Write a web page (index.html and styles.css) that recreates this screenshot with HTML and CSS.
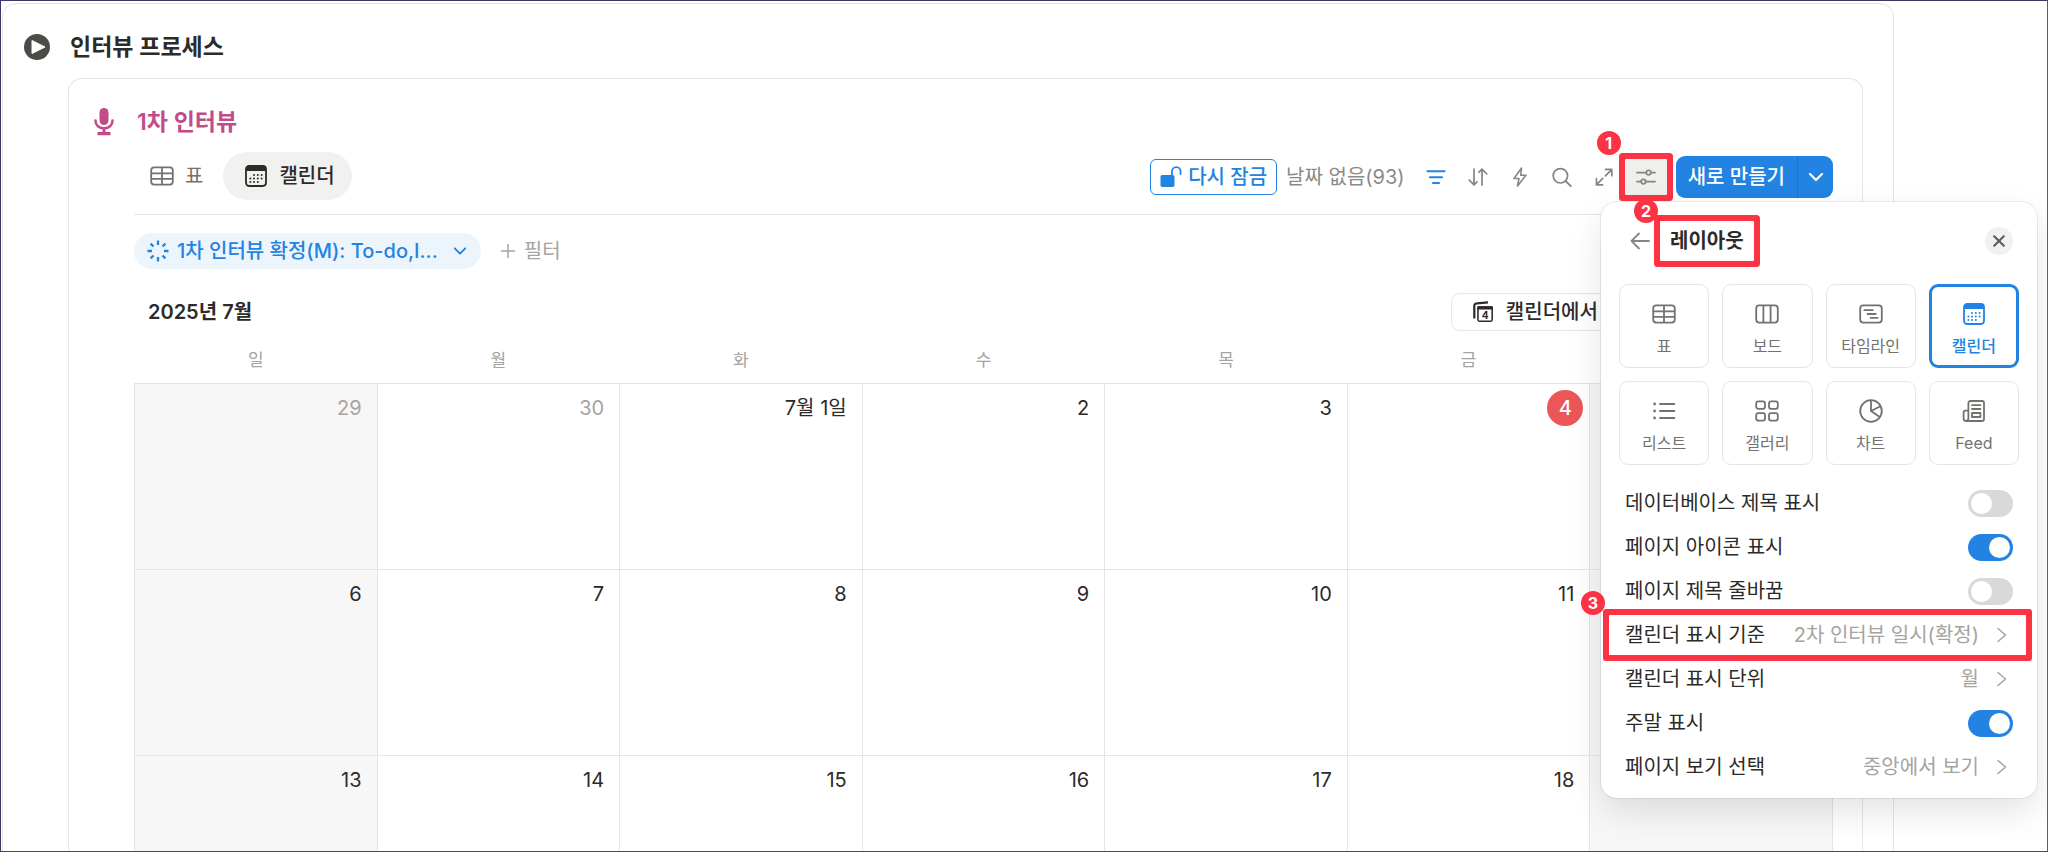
FILE: index.html
```html
<!DOCTYPE html>
<html lang="ko">
<head>
<meta charset="utf-8">
<meta name="viewport" content="width=device-width, initial-scale=1">
<title>인터뷰 프로세스</title>
<link rel="stylesheet" href="styles.css">
</head>
<body>
<svg class="sprite" aria-hidden="true">
  <symbol id="i-table" viewBox="0 0 24 24"><g fill="none" stroke="currentColor" stroke-width="1.8"><rect x="1.2" y="3.4" width="21.6" height="17.2" rx="3"/><path d="M1.2 9.4h21.6M1.2 14.8h21.6M12 3.4v17.2"/></g></symbol>
  <symbol id="i-board" viewBox="0 0 24 24"><g fill="none" stroke="currentColor" stroke-width="1.8"><rect x="1.2" y="3.4" width="21.6" height="17.2" rx="3"/><path d="M8.4 3.4v17.2M15.6 3.4v17.2"/></g></symbol>
  <symbol id="i-timeline" viewBox="0 0 24 24"><g fill="none" stroke="currentColor" stroke-width="1.8" stroke-linecap="round"><rect x="1.2" y="3.4" width="21.6" height="17.2" rx="3"/><path d="M5.4 8.2h8.4M8.6 12h8.2M11.6 15.8h7"/></g></symbol>
  <symbol id="i-calendar" viewBox="0 0 24 24"><rect x="2" y="2" width="20" height="20" rx="3.2" fill="none" stroke="currentColor" stroke-width="1.8"/><path d="M2 7V5a3.6 3.6 0 0 1 3.6-3.6h12.8A3.6 3.6 0 0 1 22 5v2z" fill="currentColor"/><g fill="currentColor"><circle cx="10" cy="10.9" r="1"/><circle cx="13.8" cy="10.9" r="1"/><circle cx="17.6" cy="10.9" r="1"/><circle cx="6.4" cy="14.5" r="1"/><circle cx="10" cy="14.5" r="1"/><circle cx="13.8" cy="14.5" r="1"/><circle cx="17.6" cy="14.5" r="1"/><circle cx="6.4" cy="18.1" r="1"/><circle cx="10" cy="18.1" r="1"/><circle cx="13.8" cy="18.1" r="1"/></g></symbol>
  <symbol id="i-list" viewBox="0 0 24 24"><g fill="none" stroke="currentColor" stroke-width="1.8" stroke-linecap="round"><path d="M8 5h14.4M8 12h14.4M8 19h14.4"/></g><g fill="currentColor"><circle cx="2.6" cy="5" r="1.4"/><circle cx="2.6" cy="12" r="1.4"/><circle cx="2.6" cy="19" r="1.4"/></g></symbol>
  <symbol id="i-gallery" viewBox="0 0 24 24"><g fill="none" stroke="currentColor" stroke-width="1.8"><rect x="1.2" y="2.4" width="8.8" height="7.4" rx="2"/><rect x="14" y="2.4" width="8.8" height="7.4" rx="2"/><rect x="1.2" y="14.2" width="8.8" height="7.4" rx="2"/><rect x="14" y="14.2" width="8.8" height="7.4" rx="2"/></g></symbol>
  <symbol id="i-chart" viewBox="0 0 24 24"><g fill="none" stroke="currentColor" stroke-width="1.8" stroke-linejoin="round"><circle cx="12" cy="12" r="10.8"/><path d="M12 1.2V12l9.4-4.8M12 12l8.8 6"/></g></symbol>
  <symbol id="i-feed" viewBox="0 0 24 24"><g fill="none" stroke="currentColor" stroke-width="1.8" stroke-linejoin="round" stroke-linecap="round"><path d="M6.4 18.8V4a2 2 0 0 1 2-2H20a2 2 0 0 1 2 2v16a2 2 0 0 1-2 2H4a2.4 2.4 0 0 1-2.4-2.4v-6.2a1.8 1.8 0 0 1 1.8-1.8h3M6.4 18.8A2.8 2.8 0 0 1 4 22M10 6.2h8.4M10 10h8.4"/><rect x="10" y="14" width="8.4" height="4"/></g></symbol>
  <symbol id="i-chevron-down" viewBox="0 0 16 16"><path d="M2 5l6 6 6-6" fill="none" stroke="currentColor" stroke-width="2.2" stroke-linecap="round" stroke-linejoin="round"/></symbol>
  <symbol id="i-chevron-right" viewBox="0 0 10 16"><path d="M1 1.5L8.5 8 1 14.5" fill="none" stroke="currentColor" stroke-width="1.5" stroke-linecap="round" stroke-linejoin="round"/></symbol>
</svg>

<main class="frame">
  <section class="card outer-card">
    <header class="page-title">
      <svg class="play-icon" viewBox="0 0 26 26" aria-hidden="true"><circle cx="13" cy="13" r="13" fill="#4c4b48"/><path d="M8 6.5v13L21 13z" fill="#fff" stroke="#fff" stroke-linejoin="round"/></svg>
      <h1>인터뷰 프로세스</h1>
    </header>

    <section class="card inner-card">
      <header class="section-title">
        <svg class="mic-icon" viewBox="0 0 20 28" aria-hidden="true"><rect x="5.5" y="0" width="9" height="17" rx="4.5" fill="currentColor"/><path d="M1.5 12.500c0 5 3.500 7.800 8.500 7.800s8.500-2.800 8.500-7.800" fill="none" stroke="currentColor" stroke-width="2.600" stroke-linecap="round"/><path d="M8.500 20h3v4h5v3.200h-13V24h5z" fill="currentColor"/></svg>
        <h2>1차 인터뷰</h2>
      </header>

      <div class="database">
        <div class="view-bar">
          <nav class="tabs" aria-label="보기">
            <button class="tab" type="button"><svg class="icon"><use href="#i-table"/></svg>표</button>
            <button class="tab tab-active" type="button"><svg class="icon"><use href="#i-calendar"/></svg>캘린더</button>
          </nav>
          <div class="tools">
            <button class="relock" type="button">
              <svg class="lock-icon" viewBox="0 0 22 22" aria-hidden="true"><rect x="0.5" y="9" width="14" height="12" rx="1.8" fill="currentColor"/><path d="M12 9.5V5.500a4.300 4.300 0 0 1 8.600 0V8" fill="none" stroke="currentColor" stroke-width="1.800" stroke-linecap="round"/></svg>다시 잠금</button>
            <button class="no-date" type="button">날짜 없음(93)</button>
            <button class="tool tool-on" type="button" aria-label="필터"><svg class="tool-icon" viewBox="0 0 20 20"><path d="M1.500 4.200h17M4 10.200h12M7 16h6" fill="none" stroke="currentColor" stroke-width="2.100" stroke-linecap="round"/></svg></button>
            <button class="tool" type="button" aria-label="정렬"><svg class="tool-icon" viewBox="0 0 20 20"><path d="M6 2v15.500M1.200 13L6 17.800l3-3M14 18V2.500M11 5.200l3-3 4.800 4.800" fill="none" stroke="currentColor" stroke-width="1.700" stroke-linecap="round" stroke-linejoin="round"/></svg></button>
            <button class="tool" type="button" aria-label="자동화"><svg class="tool-icon" viewBox="0 0 20 20"><path d="M11.500 1L4 11.500h5L7.500 19 16 8.200h-5.200z" fill="none" stroke="currentColor" stroke-width="1.600" stroke-linejoin="round"/></svg></button>
            <button class="tool" type="button" aria-label="검색"><svg class="tool-icon" viewBox="0 0 20 20"><circle cx="8.400" cy="8.800" r="7.200" fill="none" stroke="currentColor" stroke-width="1.700"/><path d="M13.600 14l5.200 5.200" stroke="currentColor" stroke-width="1.800" stroke-linecap="round"/></svg></button>
            <button class="tool" type="button" aria-label="확대"><svg class="tool-icon" viewBox="0 0 20 20"><path d="M11.500 2.400h6.300v6.300M17.400 2.800l-6 6M2.400 11.500v6.300h6.300M2.800 17.400l6-6" fill="none" stroke="currentColor" stroke-width="1.700" stroke-linecap="round" stroke-linejoin="round"/></svg></button>
            <div class="step-mark">
              <button class="tool tool-settings" type="button" aria-label="설정"><svg class="tool-icon" viewBox="0 0 20 20"><g fill="none" stroke="currentColor" stroke-width="1.700" stroke-linecap="round"><path d="M1 5.600h9.200M15 5.600h4M1 14.600h4M9.800 14.600H19"/><circle cx="12.600" cy="5.600" r="2.300"/><circle cx="7.400" cy="14.600" r="2.300"/></g></svg></button>
              <span class="step step-one">1</span>
            </div>
            <div class="new-group">
              <button class="new-main" type="button">새로 만들기</button>
              <button class="new-more" type="button" aria-label="템플릿"><svg class="chevron-lg"><use href="#i-chevron-down"/></svg></button>
            </div>
          </div>
        </div>

        <div class="filters">
          <button class="chip" type="button">
            <svg class="spark-icon" viewBox="0 0 22 22" aria-hidden="true"><path d="M11 .5v4.500M11 17v4.500M.5 11H5M17 11h4.500M3.600 3.600l2.900 2.900M15.500 15.500l2.900 2.900M18.400 3.600l-2.900 2.900M6.500 15.500l-2.900 2.900" stroke="currentColor" stroke-width="2.300"/></svg>
            <span>1차 인터뷰 확정(M): To-do,I...</span>
            <svg class="chevron-sm"><use href="#i-chevron-down"/></svg>
          </button>
          <button class="add-filter" type="button"><svg class="plus-icon" viewBox="0 0 14 14" aria-hidden="true"><path d="M7 0v14M0 7h14" stroke="currentColor" stroke-width="1.500"/></svg>필터</button>
        </div>

        <div class="month-bar">
          <h3>2025년 7월</h3>
          <button class="open-calendar" type="button">
            <svg class="stack-icon" viewBox="0 0 24 24" aria-hidden="true"><path d="M2.500 19V5.500a3 3 0 0 1 3-3l12-.9" fill="none" stroke="currentColor" stroke-width="2.400"/><rect x="6.500" y="6.500" width="15.500" height="15.500" rx="1.500" fill="none" stroke="currentColor" stroke-width="1.700"/><path d="M5.700 5.700h17v3.600h-17z" fill="currentColor"/><text class="stack-digit" x="14.300" y="19.600" text-anchor="middle">4</text></svg>캘린더에서 관리</button>
        </div>

        <table class="calendar">
          <thead>
            <tr><th>일</th><th>월</th><th>화</th><th>수</th><th>목</th><th>금</th><th>토</th></tr>
          </thead>
          <tbody>
            <tr><td class="weekend other">29</td><td class="other">30</td><td>7월 1일</td><td>2</td><td>3</td><td><span class="today">4</span></td><td class="weekend">5</td></tr>
            <tr><td class="weekend">6</td><td>7</td><td>8</td><td>9</td><td>10</td><td>11</td><td class="weekend">12</td></tr>
            <tr><td class="weekend">13</td><td>14</td><td>15</td><td>16</td><td>17</td><td>18</td><td class="weekend">19</td></tr>
          </tbody>
        </table>
      </div>
    </section>
  </section>

  <aside class="panel" aria-label="레이아웃">
    <span class="step step-two">2</span>
    <header class="panel-head">
      <button class="back" type="button" aria-label="뒤로"><svg class="back-icon" viewBox="0 0 20 18"><path d="M9 1.500L1.500 9 9 16.500M1.500 9H19" fill="none" stroke="currentColor" stroke-width="1.800" stroke-linecap="round" stroke-linejoin="round"/></svg></button>
      <h2 class="panel-title">레이아웃</h2>
      <button class="close" type="button" aria-label="닫기"><svg class="close-icon" viewBox="0 0 12 12"><path d="M1.200 1.200l9.600 9.600M10.800 1.200l-9.600 9.600" stroke="currentColor" stroke-width="2.100" stroke-linecap="round"/></svg></button>
    </header>

    <div class="layouts">
      <button class="layout" type="button"><svg class="icon"><use href="#i-table"/></svg>표</button>
      <button class="layout" type="button"><svg class="icon"><use href="#i-board"/></svg>보드</button>
      <button class="layout" type="button"><svg class="icon"><use href="#i-timeline"/></svg>타임라인</button>
      <button class="layout layout-active" type="button"><svg class="icon"><use href="#i-calendar"/></svg>캘린더</button>
      <button class="layout" type="button"><svg class="icon"><use href="#i-list"/></svg>리스트</button>
      <button class="layout" type="button"><svg class="icon"><use href="#i-gallery"/></svg>갤러리</button>
      <button class="layout" type="button"><svg class="icon"><use href="#i-chart"/></svg>차트</button>
      <button class="layout" type="button"><svg class="icon"><use href="#i-feed"/></svg>Feed</button>
    </div>

    <div class="options">
      <label class="option">데이터베이스 제목 표시<input class="switch" type="checkbox" role="switch"></label>
      <label class="option">페이지 아이콘 표시<input class="switch" type="checkbox" role="switch" checked></label>
      <label class="option">페이지 제목 줄바꿈<input class="switch" type="checkbox" role="switch"></label>
      <div class="option-mark">
        <button class="option" type="button">캘린더 표시 기준<span class="value">2차 인터뷰 일시(확정)<svg class="chevron-right"><use href="#i-chevron-right"/></svg></span></button>
        <span class="step step-three">3</span>
      </div>
      <button class="option" type="button">캘린더 표시 단위<span class="value">월<svg class="chevron-right"><use href="#i-chevron-right"/></svg></span></button>
      <label class="option">주말 표시<input class="switch" type="checkbox" role="switch" checked></label>
      <button class="option" type="button">페이지 보기 선택<span class="value">중앙에서 보기<svg class="chevron-right"><use href="#i-chevron-right"/></svg></span></button>
    </div>
  </aside>
</main>
</body>
</html>
```

FILE: styles.css
```css
:root {
  --text: #2c2b29;
  --muted: #73726e;
  --faint: #a5a4a0;
  --line: #e6e5e3;
  --blue: #2383e2;
  --red: #fb3344;
}

* { box-sizing: border-box; }

body {
  margin: 0;
  background: #fff;
  color: var(--text);
  font-family: Inter, "Noto Sans CJK KR", sans-serif;
  font-size: 20px;
  line-height: 30px;
}

h1, h2, h3 { margin: 0; }

button {
  margin: 0;
  padding: 0;
  border: 0;
  background: none;
  color: inherit;
  font: inherit;
  white-space: nowrap;
}

svg { display: block; flex: none; }

.sprite { position: absolute; width: 0; height: 0; }

.icon { width: 24px; height: 24px; }

.frame {
  position: relative;
  height: 100vh;
  padding: 2px 153px 0 1px;
  border: 1px solid #3c3866;
  border-right-color: #4b6480;
  border-bottom-color: #474b5e;
  overflow: hidden;
}

.card {
  border: 1px solid var(--line);
  border-bottom: 0;
  border-radius: 14px 14px 0 0;
}

.outer-card { padding: 28px 30px 0 65px; }

.page-title {
  display: flex;
  align-items: center;
  gap: 20px;
  margin: 0 0 16px -44px;
}

.page-title h1 { font-size: 23px; font-weight: 600; line-height: 30px; }

.play-icon { width: 26px; height: 26px; }

.inner-card { padding: 28px 29px 0 25px; }

.section-title {
  display: flex;
  align-items: center;
  gap: 23px;
  color: #c14c8a;
}

.section-title h2 { font-size: 23px; font-weight: 600; line-height: 30px; }

.mic-icon { width: 20px; height: 28px; }

.database { padding-left: 40px; }

.view-bar {
  display: flex;
  align-items: center;
  justify-content: space-between;
  margin-top: 15px;
  padding-bottom: 14px;
  border-bottom: 1px solid var(--line);
}

.tabs { display: flex; }

.tab {
  display: flex;
  align-items: center;
  gap: 11px;
  height: 48px;
  padding: 0 20px 0 16px;
  border-radius: 24px;
  color: var(--muted);
}

.tab-active {
  padding: 0 17px 0 21px;
  background: #f1f1f0;
  color: var(--text);
  font-weight: 500;
}

.tools { display: flex; align-items: center; padding-top: 2px; }

.relock {
  display: flex;
  align-items: center;
  gap: 6px;
  height: 36px;
  padding: 0 9px;
  border: 1px solid var(--blue);
  border-radius: 6px;
  color: var(--blue);
  font-weight: 500;
}

.lock-icon { width: 22px; height: 22px; }

.no-date { padding: 0 10px 0 9px; color: #8b8a87; }

.tool {
  display: flex;
  align-items: center;
  justify-content: center;
  width: 42px;
  height: 36px;
  color: #868582;
}

.tool-on { color: var(--blue); }

.tool-icon { width: 20px; height: 20px; }

.step-mark { position: relative; margin-right: 9px; }

.tool-settings {
  background: #efefee;
  box-shadow: 0 0 0 6px var(--red);
  border-radius: 1px;
}

.step {
  position: absolute;
  z-index: 1;
  width: 24px;
  height: 24px;
  border-radius: 50%;
  background: var(--red);
  color: #fff;
  font-size: 16px;
  font-weight: 700;
  line-height: 24px;
  text-align: center;
}

.step-one { top: -28px; left: -28px; }
.step-two { top: -3px; left: 33px; }
.step-three { top: -22px; left: -38px; }

.new-group {
  display: flex;
  height: 42px;
  border-radius: 9px;
  background: var(--blue);
  color: #fff;
  font-weight: 500;
}

.new-main { padding: 0 12px; border-right: 1px solid #1b73ca; }

.new-more {
  display: flex;
  align-items: center;
  justify-content: center;
  width: 35px;
}

.chevron-lg { width: 16px; height: 16px; }

.filters {
  display: flex;
  align-items: center;
  gap: 20px;
  padding-top: 18px;
}

.chip {
  display: flex;
  align-items: center;
  gap: 8px;
  height: 36px;
  padding: 0 14px 0 13px;
  border-radius: 18px;
  background: #edf5fc;
  color: var(--blue);
  font-weight: 500;
}

.spark-icon { width: 22px; height: 22px; }

.chevron-sm { width: 14px; height: 14px; margin-left: 7px; }

.add-filter {
  display: flex;
  align-items: center;
  gap: 9px;
  color: var(--faint);
}

.plus-icon { width: 14px; height: 14px; }

.month-bar {
  display: flex;
  align-items: center;
  justify-content: space-between;
  margin-top: 24px;
  padding: 0 180px 0 14px;
}

.month-bar h3 { font-size: 20px; font-weight: 600; }

.open-calendar {
  display: flex;
  align-items: center;
  gap: 12px;
  height: 38px;
  padding: 0 12px 0 20px;
  border: 1px solid var(--line);
  border-radius: 9px;
  font-weight: 500;
}

.stack-icon { width: 22px; height: 22px; }

.stack-digit { fill: currentColor; font-size: 11px; font-weight: 700; }

.calendar {
  width: 100%;
  table-layout: fixed;
  border-collapse: collapse;
}

.calendar th {
  height: 52px;
  padding: 6px 0 0;
  color: var(--faint);
  font-size: 17px;
  font-weight: 400;
}

.calendar td {
  height: 186px;
  padding: 9px 15px;
  border: 1px solid var(--line);
  text-align: right;
  vertical-align: top;
}

.calendar .weekend { background: #f7f7f7; }

.calendar .other { color: var(--faint); }

.today {
  display: inline-block;
  width: 36px;
  height: 36px;
  margin: -3px -9px 0 0;
  border-radius: 50%;
  background: #eb5757;
  color: #fff;
  font-weight: 500;
  line-height: 36px;
  text-align: center;
}

.panel {
  position: absolute;
  top: 201px;
  right: 10px;
  z-index: 2;
  width: 436px;
  padding: 25px 18px 9px;
  border-radius: 16px;
  background: #fff;
  box-shadow: 0 0 0 1px rgba(0, 0, 0, 0.07), 0 14px 34px rgba(0, 0, 0, 0.11);
}

.panel-head {
  display: flex;
  align-items: center;
  margin-bottom: 29px;
  padding: 0 6px 0 11px;
}

.back { color: #868582; }

.back-icon { width: 20px; height: 18px; }

.panel-title {
  margin: -6px auto -6px 10px;
  padding: 5px 10px;
  font-size: 20px;
  font-weight: 600;
  line-height: 30px;
  box-shadow: 0 0 0 6px var(--red);
  border-radius: 1px;
}

.close {
  display: flex;
  align-items: center;
  justify-content: center;
  width: 28px;
  height: 28px;
  border-radius: 50%;
  background: #f1f1f0;
  color: #5f5e5b;
}

.close-icon { width: 12px; height: 12px; }

.layouts {
  display: grid;
  grid-template-columns: repeat(4, 1fr);
  gap: 13px;
}

.layout {
  display: flex;
  flex-direction: column;
  align-items: center;
  gap: 8px;
  height: 84px;
  padding-top: 17px;
  border: 1px solid var(--line);
  border-radius: 9px;
  color: var(--muted);
  font-size: 16px;
  line-height: 24px;
}

.layout-active {
  padding-top: 15px;
  border: 3px solid var(--blue);
  color: var(--blue);
  font-weight: 500;
}

.options { padding-top: 16px; }

.option {
  display: flex;
  align-items: center;
  justify-content: space-between;
  width: 100%;
  height: 44px;
  padding: 0 6px;
}

.option-mark { position: relative; }

.option-mark::after {
  content: "";
  position: absolute;
  inset: -4px -13px -4px -16px;
  border: 6px solid var(--red);
  border-radius: 3px;
  pointer-events: none;
}

.value {
  display: flex;
  align-items: center;
  gap: 18px;
  padding-right: 6px;
  color: var(--faint);
}

.chevron-right { width: 10px; height: 16px; }

.switch {
  appearance: none;
  width: 45px;
  height: 27px;
  margin: 0;
  padding: 3px;
  border-radius: 14px;
  background: #dad9d7;
}

.switch::before {
  content: "";
  display: block;
  width: 21px;
  height: 21px;
  border-radius: 50%;
  background: #fff;
}

.switch:checked { background: var(--blue); }

.switch:checked::before { margin-left: auto; }
```
